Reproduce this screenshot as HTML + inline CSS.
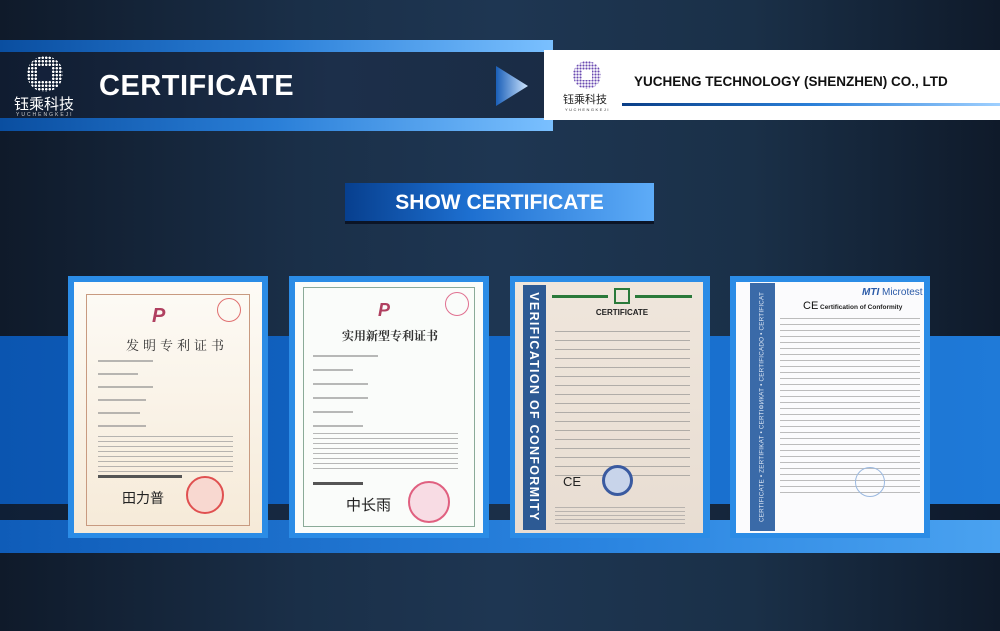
<!DOCTYPE html>
<html><head><meta charset="utf-8">
<style>
*{margin:0;padding:0;box-sizing:border-box}
body{width:1000px;height:631px;overflow:hidden;position:relative;font-family:"Liberation Sans","Noto Sans CJK SC",sans-serif;
background:linear-gradient(90deg,#0f1a2a 0%,#1a2f48 30%,#1e3652 50%,#1a3048 75%,#0f1a2a 100%)}
.abs{position:absolute}
.dots{background:radial-gradient(circle,#fff 45%,transparent 55%);background-size:3.5px 3.5px;border-radius:50%}
.line{height:2px;background:#8a8a8a;opacity:.6;position:absolute}
</style></head><body>
<div class="abs" style="left:0;top:40px;width:553px;height:12px;background:linear-gradient(90deg,#0a4ea0,#2a7fd8 50%,#7ac0ff)"></div>
<div class="abs" style="left:0;top:52px;width:553px;height:66px;background:linear-gradient(90deg,#101c30,#1c2f4a 60%,#1a2c45)"></div>
<div class="abs" style="left:0;top:118px;width:553px;height:13px;background:linear-gradient(90deg,#0a4ea0,#2a7fd8 50%,#7ac0ff)"></div>
<div class="abs dots" style="left:27px;top:56px;width:36px;height:36px"></div>
<div class="abs" style="left:38px;top:67px;width:14px;height:14px;background:#14213a"></div>
<div class="abs" style="left:14px;top:93px;color:#fff;font-size:15px;letter-spacing:0">钰乘科技</div>
<div class="abs" style="left:16px;top:112px;color:#ccc;font-size:5px;letter-spacing:2px">YUCHENGKEJI</div>
<div class="abs" style="left:99px;top:70px;color:#fff;font-size:29px;font-weight:bold;letter-spacing:0.5px">CERTIFICATE</div>
<svg class="abs" style="left:494px;top:66px" width="36" height="40"><defs><linearGradient id="g" x1="0" x2="1"><stop offset="0" stop-color="#1a5fb8"/><stop offset="1" stop-color="#cfe6ff"/></linearGradient></defs><polygon points="2,0 34,20 2,40" fill="url(#g)"/></svg>
<div class="abs" style="left:544px;top:50px;width:456px;height:70px;background:#fff"></div>
<div class="abs" style="left:573px;top:61px;width:28px;height:28px;border-radius:50%;background:radial-gradient(circle,#6a4ab0 45%,transparent 55%);background-size:3px 3px"></div>
<div class="abs" style="left:582px;top:70px;width:10px;height:10px;background:#fff"></div>
<div class="abs" style="left:563px;top:91px;color:#222;font-size:11px">钰乘科技</div>
<div class="abs" style="left:565px;top:107px;color:#333;font-size:4px;letter-spacing:1.5px">YUCHENGKEJI</div>
<div class="abs" style="left:634px;top:74px;color:#111;font-size:13.5px;font-weight:bold;white-space:nowrap">YUCHENG TECHNOLOGY (SHENZHEN) CO., LTD</div>
<div class="abs" style="left:622px;top:103px;width:378px;height:3px;background:linear-gradient(90deg,#0a3e86,#2a7fd8 50%,#9fd0ff)"></div>
<div class="abs" style="left:345px;top:183px;width:309px;height:41px;background:linear-gradient(90deg,#073f8e,#1d6fd0 40%,#5eacf8);border-bottom:3px solid #0b1426"></div>
<div class="abs" style="left:345px;top:191px;width:309px;text-align:center;color:#fff;font-size:21px;font-weight:bold">SHOW CERTIFICATE</div>
<div class="abs" style="left:0;top:336px;width:1000px;height:168px;background:linear-gradient(90deg,#0b55b0,#1468c8 50%,#1f7ad8)"></div>
<div class="abs" style="left:0;top:504px;width:1000px;height:16px;background:linear-gradient(90deg,#0f1f36,#1b2f48 50%,#0e1a2c)"></div>
<div class="abs" style="left:0;top:520px;width:1000px;height:33px;background:linear-gradient(90deg,#0f5cb8,#2a84e0 60%,#4aa2f0)"></div>

<div class="abs" style="left:68px;top:276px;width:200px;height:262px;background:#2b8ce6"></div>
<div class="abs" style="left:74px;top:282px;width:188px;height:251px;background:linear-gradient(180deg,#fdfbf6,#f6ead8)"></div>
<div class="abs" style="left:86px;top:294px;width:164px;height:232px;border:1px solid #c89a80"></div>
<div class="abs" style="left:126px;top:335px;color:#333;font-size:13px;font-family:'Noto Serif CJK SC',serif;letter-spacing:4px">发明专利证书</div>
<div class="abs" style="left:152px;top:305px;width:22px;height:22px;color:#b04060;font-size:20px;font-weight:bold;font-style:italic">P</div>
<div class="abs" style="left:217px;top:298px;width:24px;height:24px;border:1px solid #e07070;border-radius:50%"></div>
<div class="line" style="left:98px;top:360px;width:55px"></div>
<div class="line" style="left:98px;top:373px;width:40px"></div>
<div class="line" style="left:98px;top:386px;width:55px"></div>
<div class="line" style="left:98px;top:399px;width:48px"></div>
<div class="line" style="left:98px;top:412px;width:42px"></div>
<div class="line" style="left:98px;top:425px;width:48px"></div>
<div class="abs" style="left:98px;top:436px;width:135px;height:38px;background:repeating-linear-gradient(180deg,#999 0 1px,transparent 1px 5px);opacity:.7"></div>
<div class="abs" style="left:98px;top:475px;width:84px;height:3px;background:#555"></div>
<div class="abs" style="left:122px;top:488px;color:#222;font-size:14px">田力普</div>
<div class="abs" style="left:186px;top:476px;width:38px;height:38px;border:2px solid #e05050;border-radius:50%;background:#f8d8d0"></div>

<div class="abs" style="left:289px;top:276px;width:200px;height:262px;background:#2b8ce6"></div>
<div class="abs" style="left:295px;top:282px;width:188px;height:251px;background:#fafcfa"></div>
<div class="abs" style="left:303px;top:287px;width:172px;height:240px;border:1px solid #8aaa98"></div>
<div class="abs" style="left:342px;top:327px;color:#333;font-size:12px;font-family:'Noto Serif CJK SC',serif;font-weight:bold">实用新型专利证书</div>
<div class="abs" style="left:378px;top:300px;color:#b04060;font-size:18px;font-weight:bold;font-style:italic">P</div>
<div class="abs" style="left:445px;top:292px;width:24px;height:24px;border:1px solid #e07090;border-radius:50%"></div>
<div class="line" style="left:313px;top:355px;width:65px"></div>
<div class="line" style="left:313px;top:369px;width:40px"></div>
<div class="line" style="left:313px;top:383px;width:55px"></div>
<div class="line" style="left:313px;top:397px;width:55px"></div>
<div class="line" style="left:313px;top:411px;width:40px"></div>
<div class="line" style="left:313px;top:425px;width:50px"></div>
<div class="abs" style="left:313px;top:433px;width:145px;height:40px;background:repeating-linear-gradient(180deg,#999 0 1px,transparent 1px 5px);opacity:.7"></div>
<div class="abs" style="left:313px;top:482px;width:50px;height:3px;background:#555"></div>
<div class="abs" style="left:346px;top:494px;color:#222;font-size:15px">中长雨</div>
<div class="abs" style="left:408px;top:481px;width:42px;height:42px;border:2px solid #e06080;border-radius:50%;background:#f8dce4"></div>

<div class="abs" style="left:510px;top:276px;width:200px;height:262px;background:#2b8ce6"></div>
<div class="abs" style="left:515px;top:282px;width:188px;height:251px;background:linear-gradient(180deg,#efe6dc,#e8ddd2)"></div>
<div class="abs" style="left:523px;top:285px;width:23px;height:245px;background:#2d5a94"></div>
<div class="abs" style="left:534px;top:407px;transform:translate(-50%,-50%) rotate(90deg);color:#fff;font-size:12.5px;font-weight:bold;white-space:nowrap;letter-spacing:1.3px">VERIFICATION OF CONFORMITY</div>
<div class="abs" style="left:552px;top:295px;width:56px;height:3px;background:#2a7a3a"></div>
<div class="abs" style="left:635px;top:295px;width:57px;height:3px;background:#2a7a3a"></div>
<div class="abs" style="left:614px;top:288px;width:16px;height:16px;border:2px solid #2a7a3a"></div>
<div class="abs" style="left:552px;top:308px;width:140px;text-align:center;color:#222;font-size:8px;font-weight:bold">CERTIFICATE</div>
<div class="abs" style="left:555px;top:331px;width:135px;height:150px;background:repeating-linear-gradient(180deg,#888 0 1px,transparent 1px 9px);opacity:.6"></div>
<div class="abs" style="left:563px;top:474px;color:#222;font-size:13px">CE</div>
<div class="abs" style="left:602px;top:465px;width:31px;height:31px;border:3px solid #3a5aa0;border-radius:50%;background:#c8d4ea"></div>
<div class="abs" style="left:555px;top:507px;width:130px;height:18px;background:repeating-linear-gradient(180deg,#888 0 1px,transparent 1px 4px);opacity:.5"></div>

<div class="abs" style="left:730px;top:276px;width:200px;height:262px;background:#2b8ce6"></div>
<div class="abs" style="left:736px;top:282px;width:188px;height:251px;background:#fbfbfd"></div>
<div class="abs" style="left:750px;top:283px;width:25px;height:248px;background:#3a6aa8"></div>
<div class="abs" style="left:762px;top:407px;transform:translate(-50%,-50%) rotate(-90deg);color:#dfe8f5;font-size:6.3px;white-space:nowrap;letter-spacing:.2px">CERTIFICATE • ZERTIFIKAT • CERTIФИКАТ • CERTIFICADO • CERTIFICAT</div>
<div class="abs" style="left:862px;top:287px;color:#2a5aa8;font-size:10px;font-weight:bold;font-style:italic">MTI <span style="font-weight:normal;font-style:normal">Microtest</span></div>
<div class="abs" style="left:803px;top:300px;color:#111;font-size:11px">CE</div>
<div class="abs" style="left:820px;top:304px;color:#222;font-size:6.5px;font-weight:bold">Certification of Conformity</div>
<div class="abs" style="left:780px;top:318px;width:140px;height:180px;background:repeating-linear-gradient(180deg,#888 0 1px,transparent 1px 6px);opacity:.55"></div>
<div class="abs" style="left:855px;top:467px;width:30px;height:30px;border:1px solid #9ab8e0;border-radius:50%"></div>
</body></html>
